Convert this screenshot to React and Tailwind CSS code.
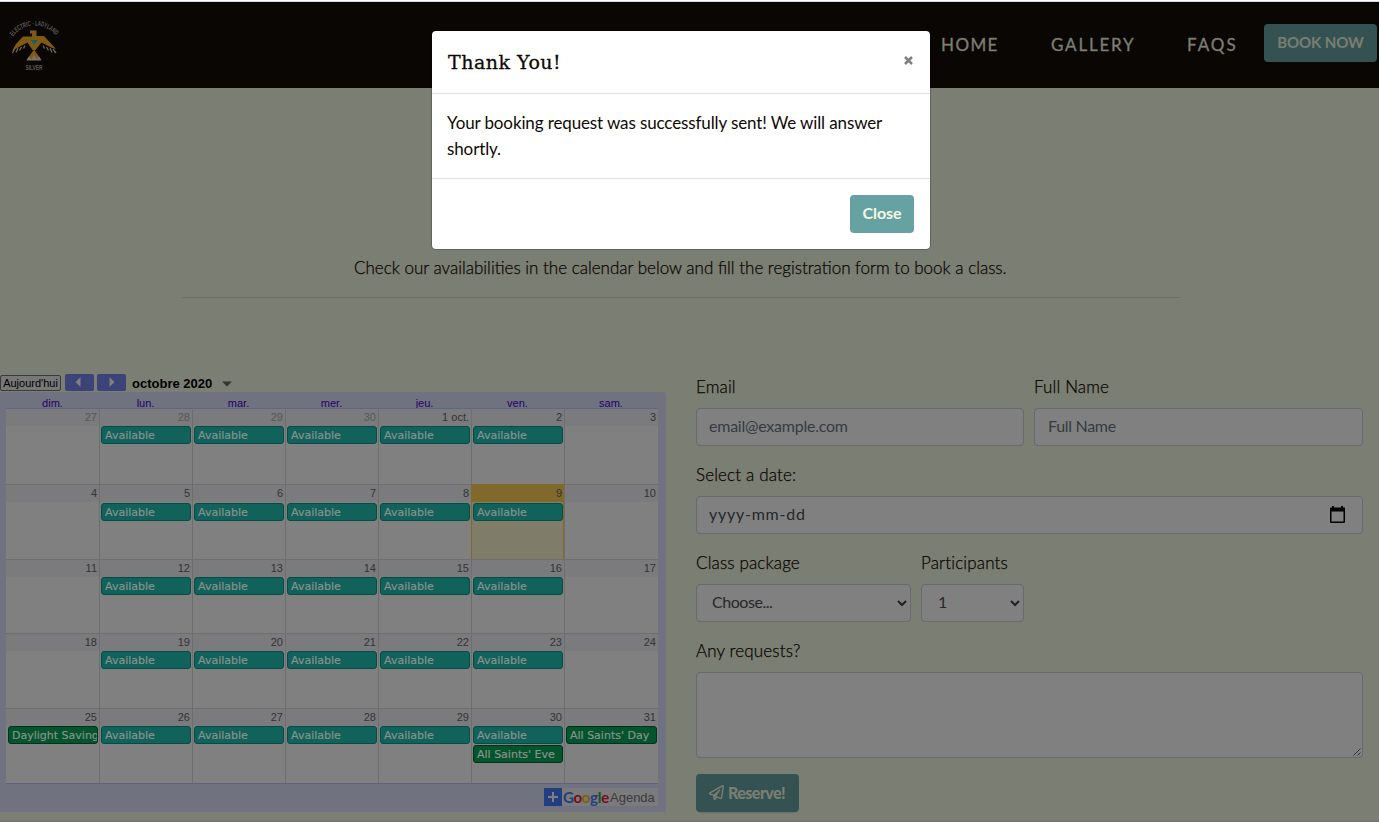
import React from "react";
import { FaRegPaperPlane } from "react-icons/fa";

const DAYS = ["dim.", "lun.", "mar.", "mer.", "jeu.", "ven.", "sam."];

const AVAILABLE = { label: "Available", kind: "open" };

const WEEKS = [
  { height: "h-[76px]", gap: "mt-0", days: ["27", "28", "29", "30", "1 oct.", "2", "3"] },
  { height: "h-[75px]", gap: "mt-px", days: ["4", "5", "6", "7", "8", "9", "10"] },
  { height: "h-[74px]", gap: "mt-0", days: ["11", "12", "13", "14", "15", "16", "17"] },
  { height: "h-[75px]", gap: "mt-0", days: ["18", "19", "20", "21", "22", "23", "24"] },
  { height: "h-[75px]", gap: "mt-0", days: ["25", "26", "27", "28", "29", "30", "31"] },
];

function eventsFor(week, day) {
  if (day > 0 && day < 6) {
    const list = [AVAILABLE];
    if (week === 4 && day === 5) list.push({ label: "All Saints' Eve", kind: "holiday" });
    return list;
  }
  if (week === 4 && day === 0) return [{ label: "Daylight Saving", kind: "holiday" }];
  if (week === 4 && day === 6) return [{ label: "All Saints' Day", kind: "holiday" }];
  return [];
}

function Logo() {
  return (
    <svg width="60" height="56" viewBox="0 0 60 56" className="mt-[15px] ml-1">
      <defs>
        <path id="arc" d="M9 19.500 A 27 27 0 0 1 52.500 19.500" />
      </defs>
      <text fontFamily="Liberation Sans" fontSize="7" fontWeight="700" fill="#605c58">
        <textPath href="#arc" textLength="49" lengthAdjust="spacingAndGlyphs">
          ELECTRIC <tspan fill="#0f5a5c">-</tspan> LADYLAND
        </textPath>
      </text>
      <g transform="translate(2 0)">
        <path
          d="M24 13.500h6.500v5.500H38L50 32l-5-1.500-9.500-5L29.500 33h-3L21.500 25.500l-9.500 5L6 34l4-7 7-7.500h9V16.500h-2z"
          fill="#805a12"
        />
        <path d="M24.500 23h7.500l-3.700 4.500z" fill="#0d6468" />
        <path d="M28 32.500L35.500 43h-15z" fill="#805a12" />
        <path d="M20.500 43.500l2.500-4 2.500 3 2.500-5 2.500 5 2.500-3 2.500 4z" fill="#77736c" />
        <path
          d="M8.500 32l-2 4M12 31l-2 4.500M15.500 30l-2 3.500M19 28.500l-1.500 3M37 28.500l1.500 3M40.500 30l2 3.500M44 31l2 4.500M47 32l3 4"
          stroke="#6b6862"
          strokeWidth="1.300"
          fill="none"
        />
        <text x="28" y="53" textAnchor="middle" textLength="17" lengthAdjust="spacingAndGlyphs" fontFamily="Liberation Sans" fontSize="7" fontWeight="700" fill="#605c58">
          SILVER
        </text>
      </g>
    </svg>
  );
}

function Header() {
  return (
    <header className="flex h-[86px] items-start bg-[#0a0603] text-[#7b7e72]">
      <Logo />
      <nav className="ml-auto flex pt-[30px] text-[17px] leading-[26px] [-webkit-text-stroke:0.35px_#7b7e72]">
        <a className="w-[110px] tracking-[1.4px]">HOME</a>
        <a className="w-[136px] tracking-[1.8px]">GALLERY</a>
        <a className="w-[77px] tracking-[2px]">FAQS</a>
      </nav>
      <button className="mt-[22px] mr-0.5 h-[38px] w-[113px] rounded bg-[#345252] pb-0.5 text-[15px] leading-[35px] font-bold tracking-[-0.1px]">
        BOOK NOW
      </button>
    </header>
  );
}

function CalendarEvent({ event }) {
  return (
    <div
      className={
        "mb-px h-[18px] overflow-hidden rounded-[3px] border pl-[3px] font-['DejaVu_Sans',sans-serif] text-[11px] leading-[17px] whitespace-nowrap text-[#8a918e] [-webkit-text-stroke:0.2px_#8a918e] " +
        (event.kind === "open" ? "border-[#044c45] bg-[#11625a]" : "border-[#00331a] bg-[#04552d]")
      }
    >
      {event.label}
    </div>
  );
}

function DayCell({ label, week, day, gap }) {
  const today = week === 1 && day === 5;
  const border = today ? "border-[#80692a]" : "border-[#6e6e6e]";
  const muted = week === 0 && day < 4;
  return (
    <div
      className={
        "min-w-0 border-t " + border + (day > 0 ? " border-l" : "") + (today ? " border-r bg-[#7f7c69]" : "") + (week === 0 ? " border-t-[#5f6685]" : "")
      }
    >
      <div
        className={
          "h-[17px] text-right text-[11px] leading-[17px] " + (today ? "bg-[#80692a] pr-px " : "bg-[#7b7b7d] pr-[2px] ") + (muted ? "text-[#575757]" : "text-[#333333]")
        }
      >
        {label}
      </div>
      <div className={gap + (day > 0 ? " pl-px" : " pl-[2px]") + (today ? " pr-0" : " pr-px")}>
        {eventsFor(week, day).map((event) => (
          <CalendarEvent key={event.label} event={event} />
        ))}
      </div>
    </div>
  );
}

function Calendar() {
  return (
    <section className="w-[666px] font-['Liberation_Sans',sans-serif]">
      <div className="flex h-[19px] items-center text-black">
        <button className="h-4 w-[61px] rounded-[2px] border border-[#3b3b3b] bg-[#787878] text-[11px] leading-[14px] whitespace-nowrap">
          Aujourd'hui
        </button>
        <button className="-mt-px ml-1 flex h-[17px] w-[29px] items-center justify-center rounded-[2px] bg-[#3b4379] pr-1">
          <svg width="6" height="10" viewBox="0 0 6 10"><path d="M5.500 0v10L0.500 5z" fill="#808080" /></svg>
        </button>
        <button className="-mt-px ml-[3px] flex h-[17px] w-[29px] items-center justify-center rounded-[2px] bg-[#3b4379]">
          <svg width="6" height="10" viewBox="0 0 6 10"><path d="M0.500 0v10l5-5z" fill="#808080" /></svg>
        </button>
        <span className="ml-1.5 pt-0.5 text-[13px] font-bold">octobre 2020</span>
        <svg className="mt-0.5 ml-[10px]" width="10" height="6" viewBox="0 0 10 6"><path d="M0 0.500h10L5 5.500z" fill="#33352f" /></svg>
      </div>
      <div className="h-[420px] rounded-tr-[3px] rounded-br-[3px] bg-[#70727f] pl-1.5">
        <div className="grid h-4 w-[652px] grid-cols-[repeat(6,93px)_94px] text-center text-[11px] leading-[23px] text-[#220066]">
          {DAYS.map((day) => (
            <span key={day}>{day}</span>
          ))}
        </div>
        <div className="w-[652px] border-b border-[#5f6085] bg-[#808080]">
          {WEEKS.map((week, w) => (
            <div key={w} className={"grid grid-cols-[repeat(6,93px)_94px] " + week.height}>
              {week.days.map((label, d) => (
                <DayCell key={d} label={label} week={w} day={d} gap={week.gap} />
              ))}
            </div>
          ))}
        </div>
        <div className="mt-1 ml-[538px] flex h-[18px] w-[114px] items-center bg-[#7b7b7e] text-[13px] whitespace-nowrap">
          <svg width="18" height="18" viewBox="0 0 18 18">
            <path d="M0 0h18v18H0z" fill="#213f80" />
            <path d="M9 4v10M4 9h10" stroke="#808080" strokeWidth="2" />
          </svg>
          <span className="ml-px w-[47px] font-['Lato',sans-serif] text-[15px] leading-[16px] font-bold tracking-[-0.3px]">
            <span className="text-[#213f80]">G</span>
            <span className="text-[#750f19]">o</span>
            <span className="text-[#7c5f08]">o</span>
            <span className="text-[#213f80]">g</span>
            <span className="text-[#125428]">l</span>
            <span className="text-[#750f19]">e</span>
          </span>
          <span className="pt-px text-[#3a3a3a]">Agenda</span>
        </div>
      </div>
    </section>
  );
}

const FIELD = "h-[38px] w-full rounded border border-[#676a70] bg-[#808080] text-[16px]";

function SelectArrow() {
  return (
    <svg width="10" height="7" viewBox="0 0 10 7" className="mr-[3px]">
      <path d="M1 1l4 4 4-4" fill="none" stroke="#1e2226" strokeWidth="2" />
    </svg>
  );
}

function Field({ label, className, children }) {
  return (
    <div className={className}>
      <label className="mb-2 block h-[26px] text-[17px] leading-[26px] font-light tracking-[0.15px] text-[#0a0603] [-webkit-text-stroke:0.25px_#0a0603]">
        {label}
      </label>
      {children}
    </div>
  );
}

function BookingForm() {
  return (
    <section className="mt-px ml-[30px] flex w-[667px] flex-col gap-4">
      <div className="flex gap-2.5">
        <Field label="Email" className="w-[328px]">
          <div className={FIELD + " flex items-center pb-0.5 pl-3 tracking-[-0.23px] text-[#363b40]"}>email@example.com</div>
        </Field>
        <Field label="Full Name" className="w-[329px]">
          <div className={FIELD + " flex items-center pb-0.5 pl-[13px] tracking-[-0.3px] text-[#363b40]"}>Full Name</div>
        </Field>
      </div>
      <Field label="Select a date:">
        <div className={FIELD + " flex items-center justify-between pr-[17px] pl-3 text-[#25282b]"}>
          <span className="pb-0.5 tracking-[0.75px]">yyyy-mm-dd</span>
          <svg width="15" height="17" viewBox="0 0 15 17" className="-mt-px">
            <path d="M2 0h2v1.500h7V0h2v1.500h1.500q.5 0 .5.500v14q0 1-1 1H1q-1 0-1-1V2q0-.5.5-.5H2zM1.500 5.500v10h12v-10z" fill="#000" fillRule="evenodd" />
          </svg>
        </div>
      </Field>
      <div className="flex gap-2.5">
        <Field label="Class package" className="w-[215px]">
          <div className={FIELD + " flex items-center justify-between pl-[15px] text-[#25282b]"}>
            <span className="pb-0.5 tracking-[-0.45px]">Choose...</span>
            <SelectArrow />
          </div>
        </Field>
        <Field label="Participants" className="w-[103px]">
          <div className={FIELD + " flex items-center justify-between pl-4 text-[#25282b]"}>
            <span className="pb-0.5">1</span>
            <SelectArrow />
          </div>
        </Field>
      </div>
      <Field label="Any requests?">
        <div className="flex h-[86px] items-end justify-end rounded border border-[#676a70] bg-[#808080] p-px">
          <svg width="8" height="8" viewBox="0 0 8 8">
            <path d="M0.500 7.500l7-7M4.500 7.500l3-3" stroke="#2b2b2b" strokeWidth="0.900" />
          </svg>
        </div>
      </Field>
      <button className="flex h-[38px] w-[103px] items-center rounded bg-[#345252] pb-px pl-[13px] text-[16px] font-black tracking-[-0.55px] text-[#7b7e72] shadow-[0_3px_1px_-2px_rgba(0,0,0,0.12)]">
        <FaRegPaperPlane size={15} className="mr-1" />
        Reserve!
      </button>
    </section>
  );
}

function Modal() {
  return (
    <div className="absolute top-[30px] left-[431px] h-[220px] w-[500px] rounded-[5px] border border-[#00000033] bg-white bg-clip-padding text-[#0f0a05]">
      <div className="flex h-[63px] items-center justify-between border-b border-[#dee2e6] pr-[17px] pl-[16px]">
        <h5 className="font-['DejaVu_Serif',serif] text-[19px] tracking-[0.5px] [-webkit-text-stroke:0.3px_#0f0a05]">Thank You!</h5>
        <svg width="9" height="9" viewBox="0 0 9 9" className="mt-[-3px]">
          <path d="M1 1l7 7M8 1l-7 7" stroke="#7f7f7f" strokeWidth="2.500" />
        </svg>
      </div>
      <div className="h-[85px] border-b border-[#dee2e6] px-[15px] pt-4 text-[17px] leading-[26px] tracking-[-0.12px]">
        Your booking request was successfully sent! We will answer
        <br />
        shortly.
      </div>
      <div className="flex justify-end pt-4 pr-4">
        <button className="h-[38px] w-16 rounded bg-[#67a2a2] pb-0.5 text-[16px] font-bold tracking-[-0.1px] text-[#f3f9e2]">Close</button>
      </div>
    </div>
  );
}

export default function App() {
  return (
    <div className="relative h-[822px] w-[1379px] overflow-hidden border-b border-[#6d7065] bg-[#7b7e72] font-['Lato',sans-serif]">
      <div className="h-0.5 border-b border-[#d5d8dc] bg-white" />
      <Header />
      <p className="mt-[167px] ml-[354px] text-[17px] leading-[26px] font-light whitespace-nowrap text-[#0a0603] [-webkit-text-stroke:0.25px_#0a0603]">
        Check our availabilities in the calendar below and fill the registration form to book a class.
      </p>
      <hr className="mt-4 ml-[182px] w-[998px] border-[#6d7064]" />
      <main className="mt-[75px] flex">
        <Calendar />
        <BookingForm />
      </main>
      <Modal />
    </div>
  );
}
